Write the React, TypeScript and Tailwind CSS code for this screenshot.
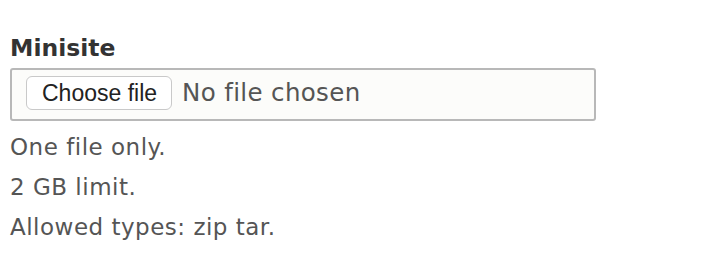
// File upload field, Drupal-style: label, a file picker box and help lines.

const helpLines = ["One file only.", "2 GB limit.", "Allowed types: zip tar."];

export default function App() {
  return (
    <div className="min-h-[272px] w-[728px] bg-white pl-[10px] pt-[33px] font-['DejaVu_Sans',sans-serif]">
      <label className="block text-[23.5px] font-bold leading-[30px] text-[#333]">Minisite</label>

      <div className="mt-[5px] flex h-[53px] w-[586px] items-center rounded-[3px] border-2 border-[#b8b8b8] bg-[#fcfcfa] pl-[14px] pb-[3px]">
        <button
          type="button"
          className="flex h-[34px] items-center rounded-[6px] border border-[#c9c9c9] bg-white pl-[15px] pr-[14px] font-['Liberation_Sans',Arial,sans-serif] text-[23px] text-[#222]"
        >
          Choose file
        </button>
        <span className="ml-[10px] text-[24.5px] tracking-[0.35px] text-[#555]">No file chosen</span>
      </div>

      <div className="mt-[6px] text-[23px] leading-[40px] tracking-[0.5px] text-[#555]">
        {helpLines.map((line) => (
          <div key={line}>{line}</div>
        ))}
      </div>
    </div>
  );
}
